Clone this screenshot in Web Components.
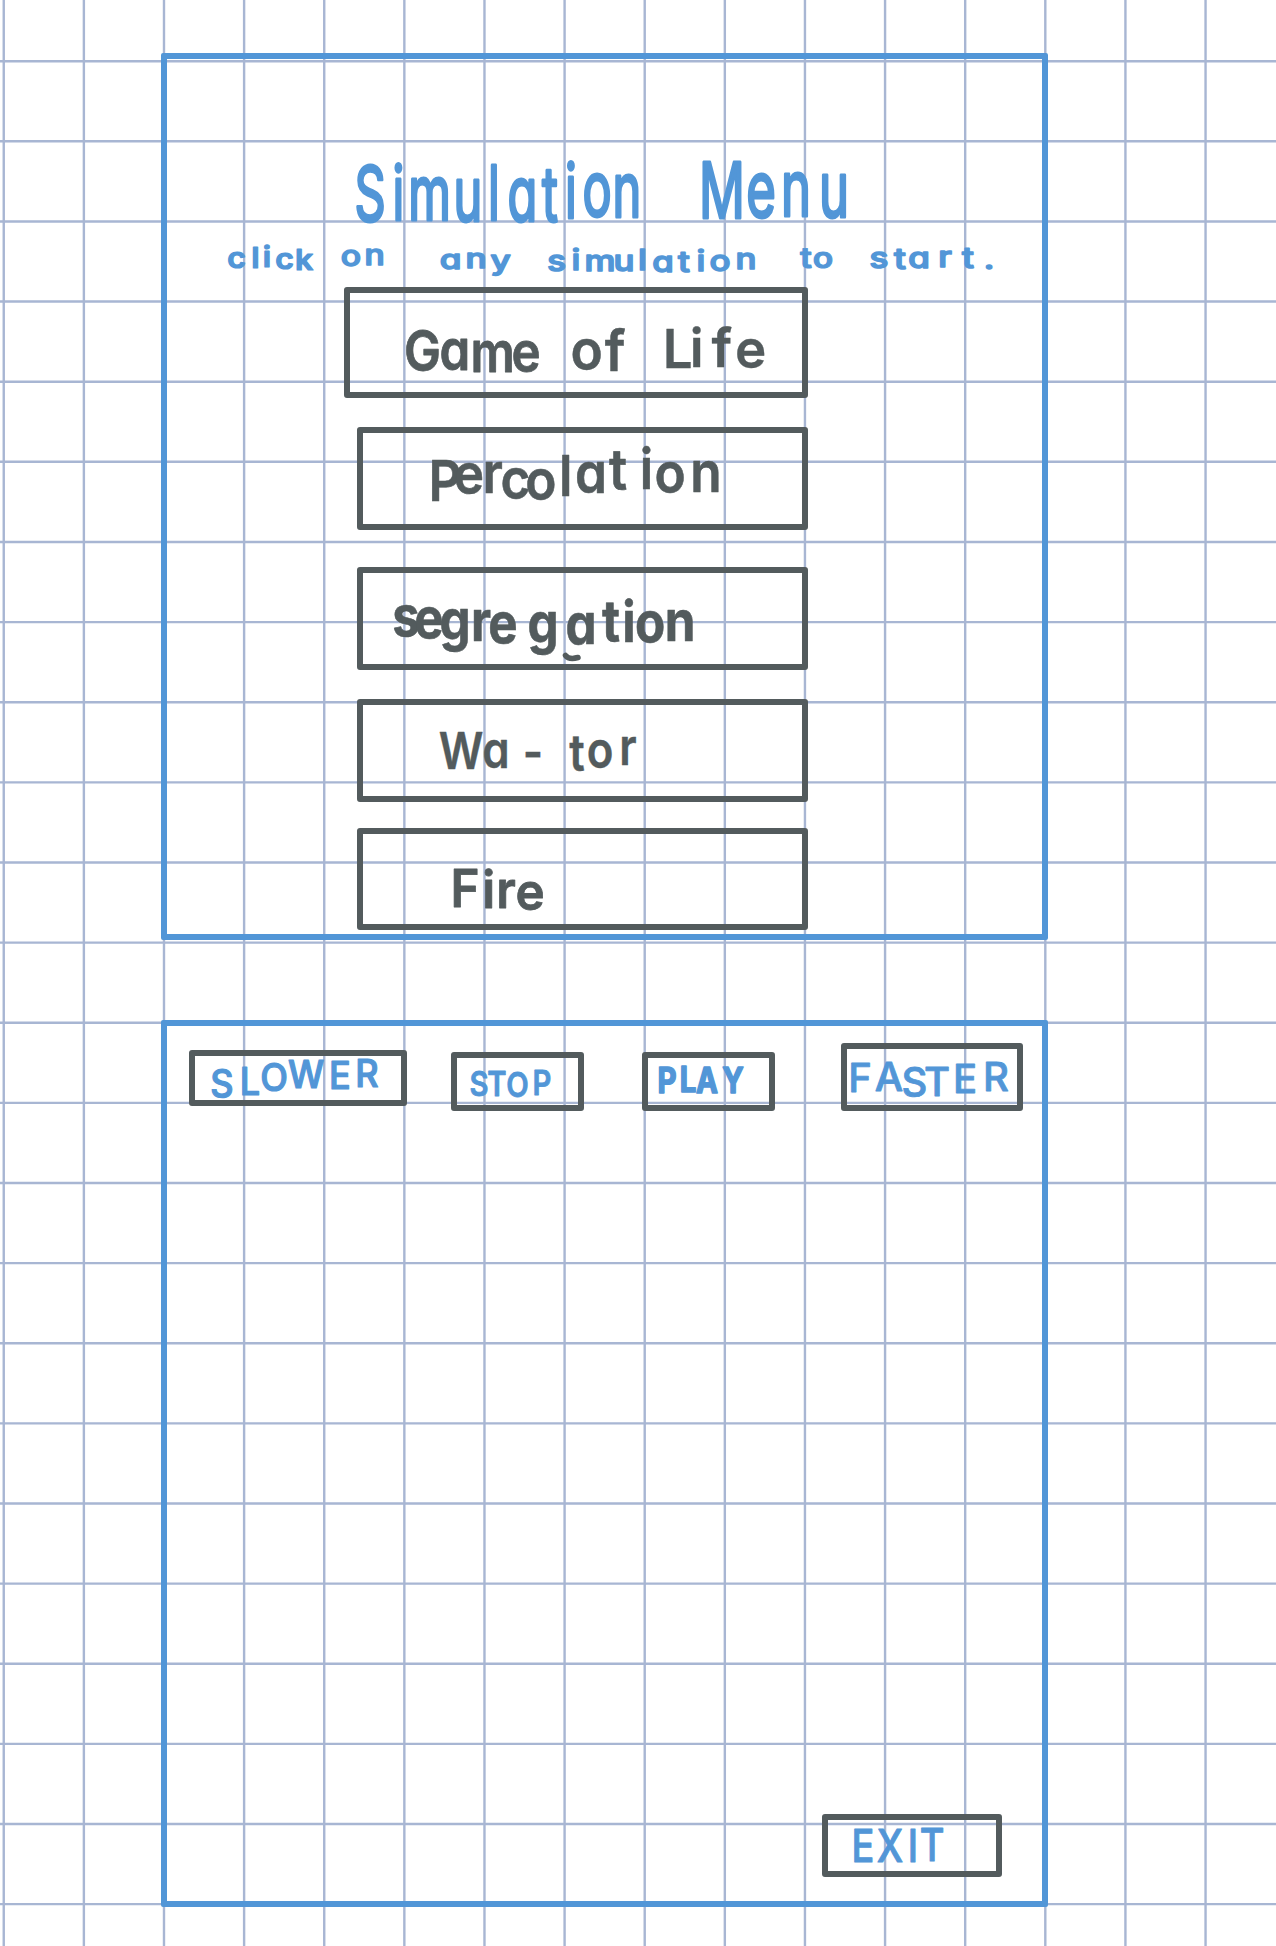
<!DOCTYPE html>
<html lang="en">
<head>
<meta charset="utf-8">
<title>Simulation Menu</title>
<style>
html,body{margin:0;padding:0;background:#fff}
body{width:1276px;height:1946px;overflow:hidden}
</style>
</head>
<body>
<sim-app></sim-app>
<script>
const BLUE = '#5296d7', SLATE = '#535b5d';

// Squared notebook paper behind whatever is slotted in.
class GridPaper extends HTMLElement {
  connectedCallback() {
    let d = '';
    for (let i = 0; i < 16; i++) d += `M${(3.75 + i * 80.12).toFixed(2)} 0V1946`;
    for (let i = 0; i < 24; i++) d += `M0 ${(61.2 + i * 80.125).toFixed(2)}H1276`;
    this.attachShadow({mode: 'open'}).innerHTML = `
      <style>
        :host{display:grid;width:1276px;height:1946px}
        svg,.sheet{grid-area:1/1;min-width:0;min-height:0}
        .sheet{box-sizing:border-box;padding:53px 0 0 161px;display:flex;flex-direction:column;gap:80px}
      </style>
      <svg width="1276" height="1946"><path d="${d}" fill="none" stroke="#a8b6d3" stroke-width="2.4"/></svg>
      <div class="sheet"><slot></slot></div>`;
  }
}

class SimFrame extends HTMLElement {
  connectedCallback() {
    this.attachShadow({mode: 'open'}).innerHTML = `
      <style>
        :host{display:flex;flex-direction:column;box-sizing:border-box;width:887px;height:887px;border:6px solid ${BLUE};border-radius:2px}
      </style><slot></slot>`;
  }
}

class SimButton extends HTMLElement {
  connectedCallback() {
    this.attachShadow({mode: 'open'}).innerHTML = `
      <style>
        :host{display:flex;flex:none;box-sizing:border-box;border:6px solid ${SLATE};border-radius:3px}
      </style><slot></slot>`;
  }
}

// A word whose letters sit on uneven centres (xs) and baselines (ys).
class InkWord extends HTMLElement {
  connectedCallback() {
    const a = n => this.getAttribute(n);
    const [x, y, w, h] = a('box').split(' ').map(Number);
    const words = a('words').split('|').map(s => {
      const [text, xs, ys, size, sx, weight, stroke] = s.split(';').map(t => t.trim());
      const k = Number(sx);
      const px = xs.split(' ').map(v => (v / k).toFixed(2)).join(' ');
      return `<text transform="scale(${k} 1)" x="${px}" y="${ys}" font-size="${size}" font-weight="${weight}" stroke-width="${stroke}">${text}</text>`;
    }).join('');
    this.attachShadow({mode: 'open'}).innerHTML = `
      <style>
        :host{display:block;flex:none;width:${w}px;height:${h}px}
        svg{display:block;overflow:visible}
        text{font-family:Inter,"Open Sans",sans-serif;font-feature-settings:"cv11" 1,"ss03" 1;text-anchor:middle;
          fill:currentColor;stroke:currentColor;stroke-linejoin:round}
      </style>
      <svg width="${w}" height="${h}" viewBox="${x} ${y} ${w} ${h}">${words}${a('mark') ? `<path d="${a('mark')}" fill="none" stroke="currentColor" stroke-width="5.5" stroke-linecap="round" stroke-linejoin="round"/>` : ''}</svg>`;
  }
}

class SimMenu extends HTMLElement {
  connectedCallback() {
    this.attachShadow({mode: 'open'}).innerHTML = `
      <style>
        :host{display:flex;flex-direction:column;color:${SLATE}}
        .head{color:${BLUE}}
        .list{display:flex;flex-direction:column;align-items:flex-end;padding-right:234px}
        sim-button{width:451px;height:103px}
        .life{width:464px;height:111px}
        .perc{margin-top:29px}.segr{margin-top:37px}.wator{margin-top:29px}
        .fire{margin-top:26px;height:102px}
      </style>
      <div class="head">
        <ink-word box="167 59 875 173" words="Simulation;370 398.5 429.6 468 494 522.5 550 571 597 627;221 220 220 221 220 221 221 218 216 217;76;0.64;400;3|Menu;722 761 796 834;218 217 216 217;77;0.66;400;3"></ink-word>
        <ink-word box="167 232 875 55" words="click;236.5 255.5 267 284.5 304;268 268 267 269 270;29;1.1;600;1.2|on;351 374.7;266 265;28;1.2;500;1.5|any;450.7 476 500.7;269 268 270;27;1.3;500;1.5|simulation;556.7 576 600 624 642.5 663 684 701 720 746;271 270 271 271 270 272 272 271 271 269;29;1.2;500;1.5|to;806 823;268 268;28;1.2;600;1|start.;879 900 919 945 968 989;268 269 268 267 268 269;28;1.25;500;1.5"></ink-word>
      </div>
      <div class="list">
        <sim-button class="life"><ink-word box="350 293 452 99" words="Game;422.5 455 492.7 526;371 370 372 372;56;0.88;600;0.8|of;586.7 615;370 371;56;0.95;600;0.5|Life;677.7 696.7 721.7 750.7;368 367 367 368;54;0.98;600;0.3"></ink-word></sim-button>
        <sim-button class="perc"><ink-word box="363 433 439 91" words="Percolation;445 469 492.7 515.5 541 565.7 591 618 646.5 670 706;501 494 493 499 500 496 493 490 489 493 492;57;0.9;600;0.6"></ink-word></sim-button>
        <sim-button class="segr"><ink-word box="363 573 439 91" mark="M565.5 655.5 Q569 660 578 657.5" words="segregation;406 429 455 481 503 543 581 611 629 650 680;636 638 640 641 643 643 644 641 642 642 641;56;0.88;700;0.6"></ink-word></sim-button>
        <sim-button class="wator"><ink-word box="363 705 439 91" words="Wa-tor;461 496 533 577 600 628;769 768 770 771 768 765;51;0.86;600;0.4"></ink-word></sim-button>
        <sim-button class="fire"><ink-word box="363 834 439 90" words="Fire;465 488.7 506 530;907 908 908 910;52;0.95;600;0.8"></ink-word></sim-button>
      </div>`;
  }
}

class SimControls extends HTMLElement {
  connectedCallback() {
    this.attachShadow({mode: 'open'}).innerHTML = `
      <style>
        :host{display:flex;flex-direction:column;flex:1;color:${BLUE}}
        .bar{display:flex;align-items:flex-start;padding:17px 0 0 22px}
        .slower{width:218px;height:56px;margin-top:7px}
        .stop{width:133px;height:59px;margin:9px 0 0 44px}
        .play{width:133px;height:59px;margin:9px 0 0 58px}
        .faster{width:182px;height:68px;margin-left:66px}
        .exit{width:180px;height:63px;margin:auto 40px 24px 0;align-self:flex-end}
      </style>
      <div class="bar">
        <sim-button class="slower"><ink-word box="195 1056 206 44" words="SLOWER;222 250 274 306 340 367;1097 1095 1091 1088.5 1089.5 1087.5;38;0.95;500;1.2"></ink-word></sim-button>
        <sim-button class="stop"><ink-word box="457 1058 121 47" words="STOP;479 497 517.5 542;1096 1096 1097 1095.5;34;0.86;600;0.8"></ink-word></sim-button>
        <sim-button class="play"><ink-word box="648 1058 121 47" words="PLAY;667 688 707 733;1093 1092 1093.5 1093.5;35;0.84;700;1.6"></ink-word></sim-button>
        <sim-button class="faster"><ink-word box="847 1049 170 56" words="FASTER;860 889 914.5 937 965 996;1092 1091 1095.5 1095.5 1092.5 1091;40;1;500;0.8"></ink-word></sim-button>
      </div>
      <sim-button class="exit"><ink-word box="828 1820 168 51" words="EXIT;863 890 913 932;1862.5 1862.5 1862 1861.5;45;0.84;500;1"></ink-word></sim-button>`;
  }
}

class SimApp extends HTMLElement {
  connectedCallback() {
    this.attachShadow({mode: 'open'}).innerHTML = `
      <style>:host{display:block}</style>
      <grid-paper>
        <sim-frame><sim-menu></sim-menu></sim-frame>
        <sim-frame><sim-controls></sim-controls></sim-frame>
      </grid-paper>`;
  }
}

customElements.define('grid-paper', GridPaper);
customElements.define('sim-frame', SimFrame);
customElements.define('sim-button', SimButton);
customElements.define('ink-word', InkWord);
customElements.define('sim-menu', SimMenu);
customElements.define('sim-controls', SimControls);
customElements.define('sim-app', SimApp);
</script>
</body>
</html>
